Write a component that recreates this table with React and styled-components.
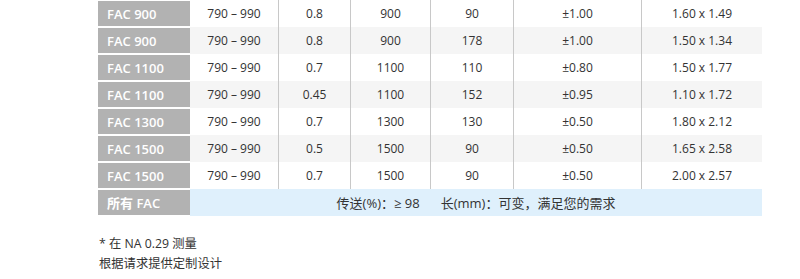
import React from "react";
import styled, { createGlobalStyle } from "styled-components";

const Global = createGlobalStyle`
  html, body { margin: 0; padding: 0; background: #fff; }
  body { font-family: "Open Sans", "Noto Sans CJK SC", sans-serif; color: #333; }
`;

const Page = styled.div`
  padding-left: 98px;
  width: 664px;
`;

const Table = styled.table`
  width: 664px;
  border-collapse: separate;
  border-spacing: 0;
  table-layout: fixed;
  font-size: 12px;
`;

const Label = styled.th`
  width: 92px;
  height: 27px;
  padding: 0 0 0 9px;
  box-sizing: border-box;
  background: #b2b2b2;
  color: #fff;
  font-size: 13px;
  font-weight: 600;
  text-align: left;
  box-shadow: inset 0 1px 0 #fff, inset 0 -1px 0 #fff;
`;

const Row = styled.tr`
  background: ${(p) => (p.$alt ? "#f5f5f5" : "#fff")};
`;

const Cell = styled.td`
  height: 27px;
  padding: 0;
  text-align: center;
  color: #333;
  border-left: ${(p) => (p.$line ? "1px solid #c8c8c8" : "none")};
`;

const Summary = styled.td`
  height: 27px;
  padding: 0;
  text-align: center;
  background: #dff0fc;
  color: #333;
  font-size: 13px;
  white-space: nowrap;
`;

const Gap = styled.span`
  display: inline-block;
  width: 21px;
`;

const Notes = styled.div`
  margin-top: 18px;
  font-size: 12.3px;
  line-height: 20px;
  color: #333;
  padding-left: 1px;
`;

const widths = [92, 88, 72, 80, 83, 128, 121];

const R = "790 \u2013 990";

const rows = [
  ["FAC 900", R, "0.8", "900", "90", "\u00b11.00", "1.60 x 1.49"],
  ["FAC 900", R, "0.8", "900", "178", "\u00b11.00", "1.50 x 1.34"],
  ["FAC 1100", R, "0.7", "1100", "110", "\u00b10.80", "1.50 x 1.77"],
  ["FAC 1100", R, "0.45", "1100", "152", "\u00b10.95", "1.10 x 1.72"],
  ["FAC 1300", R, "0.7", "1300", "130", "\u00b10.50", "1.80 x 2.12"],
  ["FAC 1500", R, "0.5", "1500", "90", "\u00b10.50", "1.65 x 2.58"],
  ["FAC 1500", R, "0.7", "1500", "90", "\u00b10.50", "2.00 x 2.57"],
];

export default function App() {
  return (
    <>
      <Global />
      <Page>
        <Table>
          <colgroup>
            {widths.map((w, i) => (
              <col key={i} style={{ width: w }} />
            ))}
          </colgroup>
          <tbody>
            {rows.map((r, i) => (
              <Row key={i} $alt={i % 2 === 1}>
                <Label>{r[0]}</Label>
                {r.slice(1).map((c, j) => (
                  <Cell key={j} $line={j > 0}>
                    {c}
                  </Cell>
                ))}
              </Row>
            ))}
            <Row>
              <Label>所有 FAC</Label>
              <Summary colSpan={6}>
                传送(%)：≥ 98<Gap />长(mm)：可变，满足您的需求
              </Summary>
            </Row>
          </tbody>
        </Table>
        <Notes>
          * 在 NA 0.29 测量
          <br />
          根据请求提供定制设计
        </Notes>
      </Page>
    </>
  );
}
